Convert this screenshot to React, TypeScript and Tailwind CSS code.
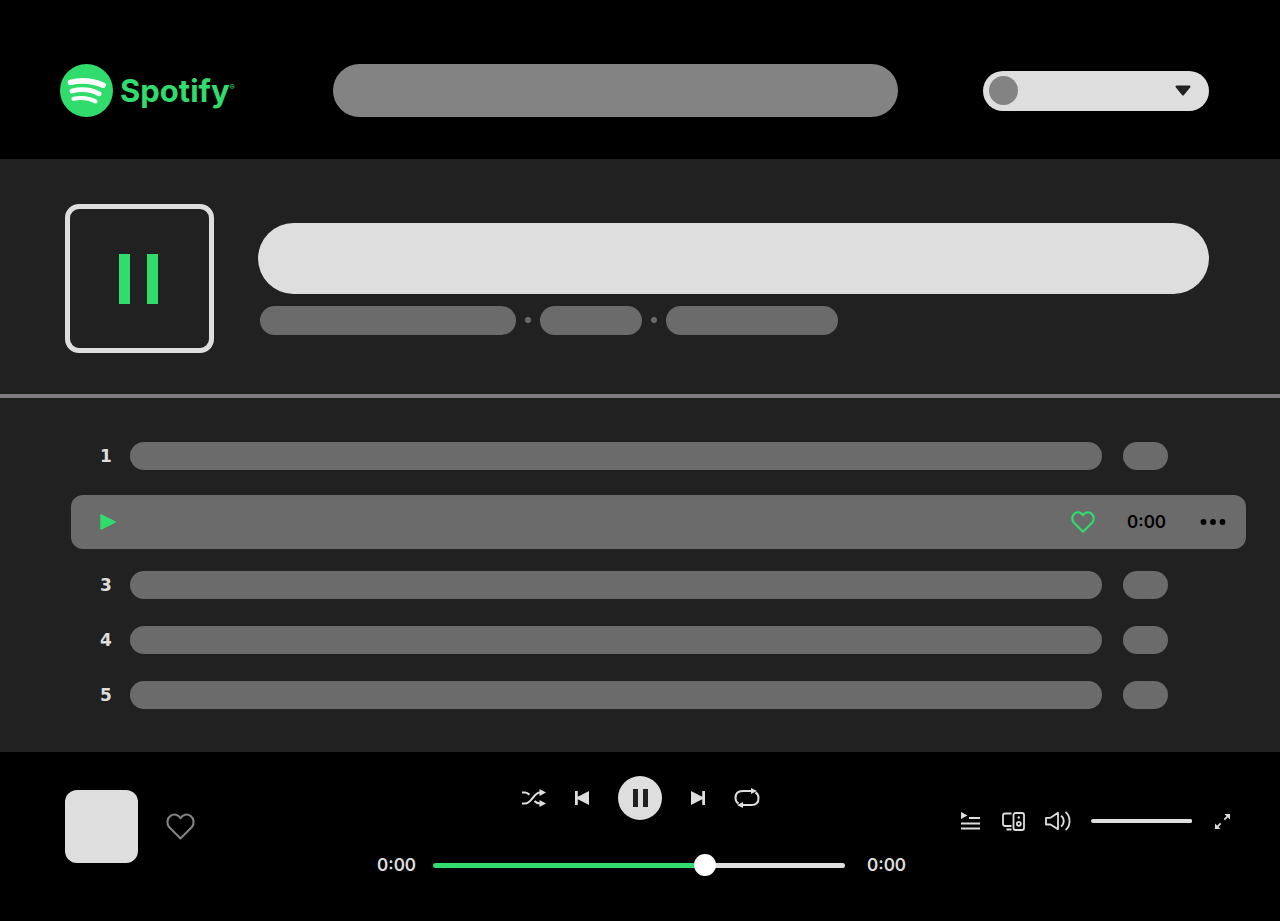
import { useState } from "react";

function SpotifyLogo() {
  return (
    <a href="#" aria-label="Spotify home" className="flex shrink-0 items-center gap-[7px] text-[#2fdc6c]">
      <svg viewBox="0 0 53 53" className="size-[53px] shrink-0" aria-hidden="true">
        <circle cx="26.5" cy="26.5" r="26.5" fill="#2fdc6c" />
        <g fill="none" stroke="#fff" strokeLinecap="round">
          <path d="M10.500 18.400c11.400-2.800 22.600-1.600 32.600 2.800" strokeWidth="5.600" />
          <path d="M12 27c9.800-2.400 19.600-1.200 27.200 2.800" strokeWidth="4.800" />
          <path d="M13.400 34.800c8-1.700 15.600-.8 22.200 2.600" strokeWidth="4" />
        </g>
      </svg>
      <span className="flex items-start leading-10">
        <span className="font-['Inter',sans-serif] text-[31px] font-bold">Spotify</span>
        <span className="text-[8px] leading-8">®</span>
      </span>
    </a>
  );
}

function Heart({ className, stroke }: { className: string; stroke: number }) {
  return (
    <svg viewBox="0 0 28 26" className={className} fill="none" stroke="currentColor" strokeWidth={stroke} strokeLinejoin="round" aria-hidden="true">
      <path d="M14 5C11.600 1 7.300.6 4.300 2.800 1 5.200.4 10.200 3 13.500L14 24.500 25 13.500c2.600-3.300 2-8.300-1.300-10.700C20.700.6 16.400 1 14 5Z" />
    </svg>
  );
}

function Shuffle() {
  return (
    <svg viewBox="0 0 24 18" className="h-[18px] w-6" fill="none" stroke="currentColor" strokeWidth="2" aria-hidden="true">
      <path d="M0 3.500h3c2 0 3.300 1 4.500 2.300M0 14.500h3c7 0 8.500-11 15-11h1M12.500 12c1.500 1.800 3 2.500 5.500 2.500h1" />
      <path d="M17.500 0l6.500 3.500-6.500 3.500zM17.500 11l6.500 3.500-6.500 3.500z" fill="currentColor" stroke="none" />
    </svg>
  );
}

function SkipBack() {
  return (
    <svg viewBox="0 0 14 14" className="size-3.5" fill="currentColor" aria-hidden="true">
      <path d="M0 0h2.800v5.800L14 0v14L2.800 8.200V14H0z" />
    </svg>
  );
}

function SkipForward() {
  return (
    <svg viewBox="0 0 14 14" className="size-3.5" fill="currentColor" aria-hidden="true">
      <path d="M14 0h-2.800v5.800L0 0v14l11.200-5.800V14H14z" />
    </svg>
  );
}

function Repeat() {
  return (
    <svg viewBox="0 0 26 20" className="h-5 w-[26px]" fill="none" stroke="currentColor" strokeWidth="2" aria-hidden="true">
      <path d="M4.500 15.500C2.600 14.500 1.500 12.700 1.500 10c0-4.500 2.500-7 7-7H19M21.500 4.500c1.900 1 3 2.800 3 5.500 0 4.500-2.500 7-7 7H7" />
      <path d="M17 0l6 3-6 3zM9 14l-6 3 6 3z" fill="currentColor" stroke="none" />
    </svg>
  );
}

function Queue() {
  return (
    <svg viewBox="0 0 20 18" className="h-[18px] w-5" fill="none" stroke="currentColor" strokeWidth="2" aria-hidden="true">
      <path d="M8 6h11M0 11.500h19M0 16.500h19" />
      <path d="M0 0l6.500 3.500L0 7z" fill="currentColor" stroke="none" />
    </svg>
  );
}

function Devices() {
  return (
    <svg viewBox="0 0 23 19" className="h-[19px] w-[23px]" fill="none" stroke="currentColor" strokeWidth="1.800" aria-hidden="true">
      <path d="M9.500 1.500H3.200C1.800 1.500 1 2.300 1 3.700v8.100C1 13.200 1.800 14 3.200 14h6.300M4.500 17.500h5" />
      <rect x="11.500" y="1" width="10.500" height="17" rx="2" />
      <circle cx="16.800" cy="11.800" r="2" />
      <circle cx="16.800" cy="5.500" r="1.200" fill="currentColor" stroke="none" />
    </svg>
  );
}

function Volume() {
  return (
    <svg viewBox="0 0 26 20" className="h-5 w-[26px]" fill="none" stroke="currentColor" strokeWidth="1.800" strokeLinejoin="round" aria-hidden="true">
      <path d="M1 6.800h4.500L13 1.800v16.400L5.500 13.500H1z" />
      <path d="M16 4.800c3.600 2.200 3.600 8.400 0 10.600M20.500 1c5.400 4.200 5.400 13.800 0 18" />
    </svg>
  );
}

function Expand() {
  return (
    <svg viewBox="0 0 17 17" className="size-[17px]" fill="currentColor" stroke="currentColor" strokeWidth="1.800" aria-hidden="true">
      <path d="M10.300 6.700l3-3M6.700 10.300l-3 3" />
      <path d="M10.500 1H16v5.500zM1 10.500V16h5.500z" stroke="none" />
    </svg>
  );
}

function TrackRow({ number }: { number: number }) {
  return (
    <li className="flex h-7 items-center pr-[78px] pl-[29px]">
      <span className="w-[30px] font-['DejaVu_Sans',sans-serif] text-[17px] leading-7 font-bold text-[#dedede]">{number}</span>
      <span className="h-7 flex-1 rounded-full bg-[#6b6b6b]" />
      <span className="ml-[21px] h-7 w-[45px] rounded-full bg-[#6b6b6b]" />
    </li>
  );
}

function ActiveTrack() {
  return (
    <li className="-mt-0.5 -mb-[5px] flex h-[54px] items-center rounded-xl bg-[#6b6b6b] pr-5 pl-[29px] text-black">
      <button type="button" aria-label="Play track 2" className="text-[#2fdc6c]">
        <svg viewBox="0 0 16 16" className="size-4" fill="currentColor" aria-hidden="true">
          <path d="M1 1l14 7-14 7z" stroke="currentColor" strokeWidth="1.500" strokeLinejoin="round" />
        </svg>
      </button>
      <button type="button" aria-label="Like track 2" className="ml-auto text-[#2fdc6c]">
        <Heart className="h-[22px] w-6" stroke={2.6} />
      </button>
      <span className="ml-8 w-10 text-[17px] leading-7 font-semibold">0:00</span>
      <button type="button" aria-label="More options" className="ml-[33px]">
        <svg viewBox="0 0 26 6" className="h-1.5 w-[26px]" fill="currentColor" aria-hidden="true">
          <circle cx="3.500" cy="3" r="2.900" />
          <circle cx="13" cy="3" r="2.900" />
          <circle cx="22.500" cy="3" r="2.900" />
        </svg>
      </button>
    </li>
  );
}

export default function App() {
  const [position, setPosition] = useState(67);
  const [volume, setVolume] = useState(100);

  return (
    <div className="flex min-h-screen flex-col bg-[#212121] font-['Inter',sans-serif]">
      <header className="flex items-center bg-black pt-16 pr-[71px] pb-[42px] pl-[60px]">
        <div className="w-44 shrink-0">
          <SpotifyLogo />
        </div>
        <input
          type="search"
          aria-label="Search"
          className="mr-[85px] ml-[97px] h-[53px] min-w-0 flex-1 rounded-full bg-[#838383] px-6 text-black outline-none"
        />
        <button type="button" aria-label="Account menu" className="flex h-10 w-[226px] items-center justify-between rounded-full bg-[#dedede] pr-[18px] pl-1.5">
          <span className="size-[29px] rounded-full bg-[#838383]" />
          <svg viewBox="0 0 16 11" className="h-[11px] w-4" aria-hidden="true">
            <path d="M1.500 1.500h13L8 9.500z" fill="#212121" stroke="#212121" strokeWidth="2" strokeLinejoin="round" />
          </svg>
        </button>
      </header>

      <main>
        <section aria-label="Playlist" className="flex items-center gap-11 border-b-4 border-[#7f7b80] pt-[45px] pr-[71px] pb-[41px] pl-[65px]">
          <button type="button" aria-label="Pause playlist" className="flex size-[149px] shrink-0 items-center justify-center gap-[17px] rounded-[14px] border-5 border-[#dedede] pr-0.5">
            <span className="h-[50px] w-[11px] bg-[#2fdc6c]" />
            <span className="h-[50px] w-[11px] bg-[#2fdc6c]" />
          </button>
          <div className="flex min-w-0 flex-1 flex-col gap-3">
            <div className="h-[71px] rounded-full bg-[#dedede]" />
            <div className="flex items-center gap-[9px] pl-0.5">
              <span className="h-[29px] w-64 rounded-full bg-[#6b6b6b]" />
              <span className="size-1.5 rounded-full bg-[#6b6b6b]" />
              <span className="h-[29px] w-[102px] rounded-full bg-[#6b6b6b]" />
              <span className="size-1.5 rounded-full bg-[#6b6b6b]" />
              <span className="h-[29px] w-[172px] rounded-full bg-[#6b6b6b]" />
            </div>
          </div>
        </section>

        <ol className="flex flex-col gap-[27px] pt-11 pr-[34px] pb-[43px] pl-[71px]">
          <TrackRow number={1} />
          <ActiveTrack />
          <TrackRow number={3} />
          <TrackRow number={4} />
          <TrackRow number={5} />
        </ol>
      </main>

      <footer className="grid flex-1 grid-cols-[1fr_auto_1fr] items-start bg-black pt-6 pr-[49px] pb-11 pl-[51px] text-[#dedede]">
        <div className="flex items-center gap-7 pt-3.5 pl-3.5">
          <div className="size-[73px] rounded-xl bg-[#dedede]" />
          <button type="button" aria-label="Like" className="text-[#838383]">
            <Heart className="h-[27px] w-[29px]" stroke={2} />
          </button>
        </div>

        <div className="flex flex-col items-center gap-[33px]">
          <div className="flex items-center gap-[29px]">
            <button type="button" aria-label="Shuffle"><Shuffle /></button>
            <button type="button" aria-label="Previous"><SkipBack /></button>
            <button type="button" aria-label="Pause" className="flex size-11 items-center justify-center gap-[5px] rounded-full bg-[#dedede]">
              <span className="h-[18px] w-[5px] bg-[#212121]" />
              <span className="h-[18px] w-[5px] bg-[#212121]" />
            </button>
            <button type="button" aria-label="Next"><SkipForward /></button>
            <button type="button" aria-label="Repeat"><Repeat /></button>
          </div>
          <div className="flex items-center text-[17px] leading-6 font-semibold">
            <span className="w-14">0:00</span>
            <input
              type="range"
              aria-label="Playback position"
              value={position}
              onChange={(e) => setPosition(Number(e.target.value))}
              style={{ background: `linear-gradient(to right, #2fdc6c ${position}%, #dedede ${position}%)` }}
              className="h-[5px] w-[412px] appearance-none rounded-full [&::-webkit-slider-thumb]:size-[22px] [&::-webkit-slider-thumb]:appearance-none [&::-webkit-slider-thumb]:rounded-full [&::-webkit-slider-thumb]:bg-white"
            />
            <span className="w-[60px] pl-[22px]">0:00</span>
          </div>
        </div>

        <div className="flex items-center justify-end pt-[35px]">
          <button type="button" aria-label="Queue" className="mr-[21px]"><Queue /></button>
          <button type="button" aria-label="Connect to a device" className="mr-5"><Devices /></button>
          <button type="button" aria-label="Mute" className="mr-5"><Volume /></button>
          <input
            type="range"
            aria-label="Volume"
            value={volume}
            onChange={(e) => setVolume(Number(e.target.value))}
            style={{ background: `linear-gradient(to right, #dedede ${volume}%, #6b6b6b ${volume}%)` }}
            className="h-1 w-[101px] appearance-none rounded-full [&::-webkit-slider-thumb]:size-1 [&::-webkit-slider-thumb]:appearance-none [&::-webkit-slider-thumb]:rounded-full [&::-webkit-slider-thumb]:bg-[#dedede]"
          />
          <button type="button" aria-label="Full screen" className="ml-[22px]"><Expand /></button>
        </div>
      </footer>
    </div>
  );
}
